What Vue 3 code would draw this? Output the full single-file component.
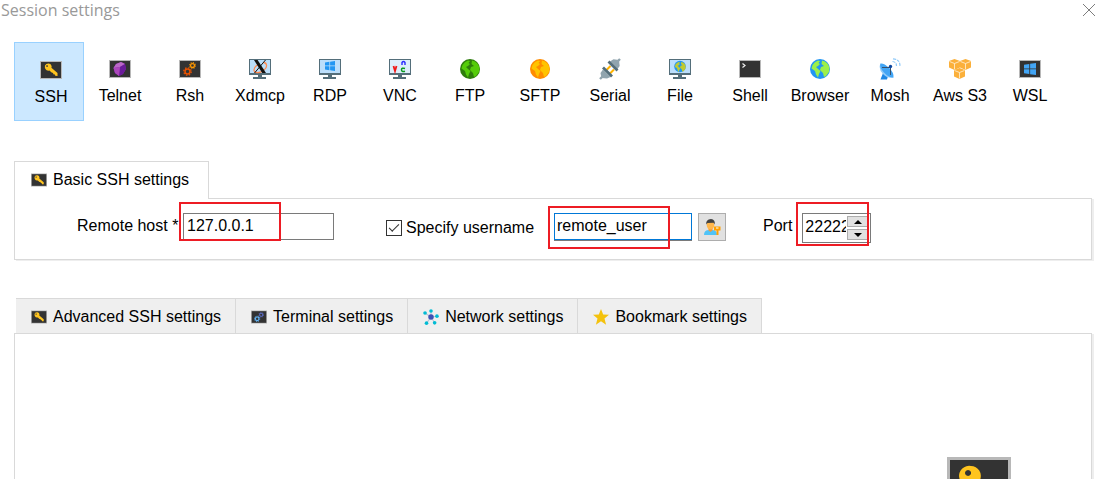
<script setup>
import { ref } from 'vue';

const sessions = ['SSH', 'Telnet', 'Rsh', 'Xdmcp', 'RDP', 'VNC', 'FTP', 'SFTP', 'Serial', 'File', 'Shell', 'Browser', 'Mosh', 'Aws S3', 'WSL'];
const activeSession = ref('SSH');

const settingTabs = [
    { label: 'Advanced SSH settings', icon: 'key' },
    { label: 'Terminal settings', icon: 'gears' },
    { label: 'Network settings', icon: 'network' },
    { label: 'Bookmark settings', icon: 'star' },
];

const host = ref('127.0.0.1');
const useName = ref(true);
const username = ref('remote_user');
const port = ref('22222');

function iconId(name){
    return '#i-' + name.toLowerCase().replace(' ', '');
}
function stepPort(n){
    port.value = String(Number(port.value) + n);
}
</script>

<template>
    <svg class="sprite" aria-hidden="true">
        <defs>
            <symbol id="i-screen" viewBox="0 0 22 22">
                <rect x="0" y="2" width="22" height="18" fill="#b8b8b8"/>
                <rect x="1" y="3" width="20" height="16" fill="#333"/>
            </symbol>
            <symbol id="i-monitor" viewBox="0 0 22 22">
                <rect x="0" y="1" width="22" height="16" fill="#546e7a"/>
                <path d="M9 17h4v2h4v2H4v-2h5z" fill="#546e7a"/>
                <rect x="1" y="2" width="20" height="13" fill="#bbdefb"/>
            </symbol>
            <symbol id="i-gear" viewBox="0 0 8 8">
                <circle cx="4" cy="4" r="2.2" fill="none" stroke="currentColor" stroke-width="1.4"/>
                <circle cx="4" cy="4" r="3.3" fill="none" stroke="currentColor" stroke-width="1.2" stroke-dasharray="1.3 1.29"/>
            </symbol>
            <symbol id="i-land" viewBox="0 0 20 20">
                <path d="M2.5 6Q4.500 2.500 8 1.500l2 .5-1.500 2L10 5 8 7 6 8l2 2 2.500 2L9 15l-1 3.500L6 15.500 5 12 1.500 9.500z"/>
                <path d="M12 1.500Q18.500 3 19.500 9L19 13l-3 4-2 1-1-4-3-3 1-3 3-1-2.500-2z"/>
            </symbol>
            <symbol id="i-win" viewBox="0 0 10 10">
                <path d="M0 1.5 4.4.8v3.8H0zM5.1.7 10 0v4.6H5.1zM0 5.3h4.4v3.9L0 8.5zM5.1 5.3H10V10l-4.9-.7z"/>
            </symbol>
            <symbol id="i-key" viewBox="0 0 22 22">
                <use href="#i-screen"/>
                <path fill="#ffc41f" fill-rule="evenodd" d="M5 6.500Q6 4.300 9 4.500q2.500.6 2.700 3l-.3 1.300 6.100 5.200v3l-2.300-.2-.3-1.400-1.600-.2-.2-1.300-1.500-.3L9.400 11.600q-2.800.5-4-1.600-.9-1.500-.4-3.500zM7 6.200a.8.800 0 1 0 .1 0z"/>
            </symbol>
            <symbol id="i-ssh" viewBox="0 0 22 22"><use href="#i-key"/></symbol>
            <symbol id="i-telnet" viewBox="0 0 22 22">
                <use href="#i-screen"/>
                <path d="M12 4 16 6l1 5-3 5-4 2-4-3-1.500-5L7 6z" fill="#8e24aa"/>
                <path d="M12 4 7 6l-2.500 4 6.500-1 5-3z" fill="#ba68c8"/>
                <path d="m11 9 5-3 1 5-3 5-4 2z" fill="#6a1b9a"/>
                <path d="M4.500 10 11 9l-1 9-4-3z" fill="#ab47bc"/>
            </symbol>
            <symbol id="i-rsh" viewBox="0 0 22 22">
                <use href="#i-screen"/>
                <use href="#i-gear" x="4" y="9" width="9" height="9" class="gear-red"/>
                <use href="#i-gear" x="10" y="4" width="7" height="7" class="gear-orange"/>
            </symbol>
            <symbol id="i-gears" viewBox="0 0 22 22">
                <use href="#i-screen"/>
                <use href="#i-gear" x="4" y="9" width="9" height="9" class="gear-sky"/>
                <use href="#i-gear" x="10" y="4" width="8" height="8" class="gear-indigo"/>
            </symbol>
            <symbol id="i-xdmcp" viewBox="0 0 22 22">
                <use href="#i-monitor"/>
                <path d="M14.5 4.5c4 .4 4 5 .5 7.500-4 3.400-9.500 3.600-10 .3C4.800 9.600 8 7.200 10.500 6.200" fill="none" stroke="#ff8a50" stroke-width="1.3"/>
                <path d="M5 2h3.600L17 15h-3.800z" fill="#111"/>
                <path d="M16.500 2 5.500 15" stroke="#111" stroke-width="1"/>
            </symbol>
            <symbol id="i-rdp" viewBox="0 0 22 22">
                <use href="#i-monitor"/>
                <use href="#i-win" x="6" y="3" width="10" height="10" fill="#2196f3"/>
            </symbol>
            <symbol id="i-vnc" viewBox="0 0 22 22">
                <use href="#i-monitor"/>
                <rect x="1" y="2" width="20" height="13" fill="#dceefb"/>
                <path d="m4.500 8 1.500 5 1.500-5" fill="none" stroke="#f01818" stroke-width="1.8"/>
                <path d="M13 7V4.500q1.500-2 3 0V7" fill="none" stroke="#2a2aff" stroke-width="1.400"/>
                <path d="M16 10.500q-3.500-1-3.500 1.200 0 2.500 3.500 1.500" fill="none" stroke="#0a9a20" stroke-width="1.500"/>
            </symbol>
            <symbol id="i-ftp" viewBox="0 0 22 22">
                <circle cx="11" cy="11" r="10" fill="#2e7d0c"/>
                <use href="#i-land" x="1" y="1" width="20" height="20" fill="#55cc0a"/>
            </symbol>
            <symbol id="i-sftp" viewBox="0 0 22 22">
                <circle cx="11" cy="11" r="10" fill="#ff8c00"/>
                <use href="#i-land" x="1" y="1" width="20" height="20" fill="#ffc400"/>
            </symbol>
            <symbol id="i-browser" viewBox="0 0 22 22">
                <circle cx="11" cy="11" r="10" fill="#2196f3"/>
                <use href="#i-land" x="1" y="1" width="20" height="20" fill="#9cf04a"/>
            </symbol>
            <symbol id="i-serial" viewBox="0 0 22 22">
                <path d="m1 21 3-3M21 1l-3 3" stroke="#90a4ae" stroke-width="2.400"/>
                <path d="M4 11.500 11.500 19 8 20.500l-5.500-.5L1.500 15z" fill="#90a4ae"/>
                <path d="m11 3.500 7.500 7.500 2.200-3-.7-6-5.500-.7z" fill="#90a4ae"/>
                <path d="m7.500 12 4-4M11 15.500l4-4" stroke="#ffb300" stroke-width="2"/>
                <path d="m4 9.500 9 9M9.500 3.500l9 9" stroke="#546e7a" stroke-width="2.800"/>
            </symbol>
            <symbol id="i-file" viewBox="0 0 22 22">
                <use href="#i-monitor"/>
                <circle cx="11" cy="8.500" r="5.800" fill="#2196f3"/>
                <use href="#i-land" x="5" y="3" width="12" height="12" fill="#c0ca33"/>
            </symbol>
            <symbol id="i-shell" viewBox="0 0 22 22">
                <use href="#i-screen"/>
                <path d="m3.500 5.500 2.500 2-2.500 2" fill="none" stroke="#eee" stroke-width="1.200"/>
            </symbol>
            <symbol id="i-mosh" viewBox="0 0 22 22">
                <path d="m4 15-2.500 6.500H8L9 18z" fill="#1e88e5"/>
                <path d="M1.500 5.500Q-1 11 4 16t10.500 3.500z" fill="#90caf9"/>
                <path d="M1.500 5.500Q5 5 10 9.800t4.500 9.700Q10 20 5 14.500T1.500 5.500z" fill="#42a5f5"/>
                <path d="M3 9.500h8.500V17" fill="none" stroke="#37506b" stroke-width="1"/>
                <circle cx="11.500" cy="8.500" r="1.700" fill="#0d47a1"/>
                <path d="M13.500 3.500q4 .5 4 4.500M14 .8q7 .4 7 7.200" fill="none" stroke="#90caf9" stroke-width="1.200" stroke-dasharray="3 1"/>
            </symbol>
            <symbol id="i-cube" viewBox="0 0 11 11">
                <path d="M5.500 0 11 2v6.500L5.500 11 0 8.500V2z" fill="#fbb03b"/>
                <path d="m.5 2.500 5 2 5-2M5.500 4.500v6" fill="none" stroke="#fff3dc" stroke-width=".8"/>
            </symbol>
            <symbol id="i-awss3" viewBox="0 0 22 22">
                <use href="#i-cube" x="0" y="1" width="11" height="11"/>
                <use href="#i-cube" x="11" y="1" width="11" height="11"/>
                <use href="#i-cube" x="5" y="10" width="11" height="11"/>
            </symbol>
            <symbol id="i-wsl" viewBox="0 0 22 22">
                <use href="#i-screen"/>
                <use href="#i-win" x="5" y="5" width="12" height="12" fill="#42a5f5"/>
            </symbol>
            <symbol id="i-network" viewBox="0 0 22 22">
                <path d="M11 11V3M11 11 2.500 5.500M11 11l8-1M11 11l5 8M11 11l-6 8.500" stroke="#b9c3d6" stroke-width="1.500"/>
                <circle cx="11" cy="11" r="3.800" fill="#3f51b5"/>
                <g fill="#00bcd4">
                    <circle cx="11" cy="2.800" r="2.500"/>
                    <circle cx="2.800" cy="5.500" r="2.500"/>
                    <circle cx="19.200" cy="9.800" r="2.500"/>
                    <circle cx="16" cy="19" r="2.500"/>
                    <circle cx="4.800" cy="19.500" r="2.500"/>
                </g>
            </symbol>
            <symbol id="i-star" viewBox="0 0 22 22">
                <path d="m11 0 3 7.700 8 .3-6.200 5.200L18 21.500l-7-4.700-7 4.700 2.200-8.300L0 8l8-.3z" fill="#f4c20d"/>
            </symbol>
            <symbol id="i-user" viewBox="0 0 18 18">
                <path d="M1 17q0-5 5-5h3q5 0 5 5z" fill="#4fc3f7"/>
                <path d="M5.500 10h4v2.500l-2 1.500-2-1.500z" fill="#ef9a3c"/>
                <ellipse cx="7.500" cy="7" rx="3.800" ry="4.600" fill="#ffb74d"/>
                <path d="M3.300 6.500Q2.500 1.500 8 1q4.500.5 3.700 5.500L10.500 4.800l-6 .2z" fill="#424242"/>
                <path d="M11 8.500h6.500v4h-2V17h-2v-4.500H11z" fill="#ffa000"/>
                <path d="M13 10h2.500" stroke="#fff" stroke-width="1"/>
            </symbol>
        </defs>
    </svg>

    <div class="dialog">
        <header class="titlebar">
            <h1 class="titlebar__text">Session settings</h1>
            <button type="button" class="titlebar__close" aria-label="Close">
                <svg viewBox="0 0 12 12" width="12" height="12"><path d="m0 0 12 12M12 0 0 12" stroke="#7d7d7d"/></svg>
            </button>
        </header>

        <nav class="sessions">
            <button
                v-for="name in sessions"
                :key="name"
                type="button"
                class="session"
                :class="{ 'session--active': name === activeSession }"
                @click="activeSession = name"
            >
                <svg class="session__icon"><use :href="iconId(name)"/></svg>
                <span>{{ name }}</span>
            </button>
        </nav>

        <section class="basic">
            <div class="tabs">
                <button type="button" class="tab tab--open">
                    <svg class="tab__icon"><use href="#i-key"/></svg>Basic SSH settings
                </button>
            </div>
            <form class="panel form" @submit.prevent>
                <div class="field field--host">
                    <label for="host">Remote host *</label>
                    <input id="host" v-model="host" type="text" class="input input--host" />
                    <span class="mark mark--host"></span>
                </div>
                <div class="field field--user">
                    <label class="check">
                        <input v-model="useName" type="checkbox" class="check__box" />Specify username
                    </label>
                    <div class="combo">
                        <input v-model="username" type="text" class="input input--user" aria-label="Username" />
                        <span class="mark mark--user"></span>
                    </div>
                    <button type="button" class="user-btn" aria-label="Manage users">
                        <svg width="18" height="18"><use href="#i-user"/></svg>
                    </button>
                </div>
                <div class="field">
                    <label for="port">Port</label>
                    <div class="spin">
                        <input id="port" v-model="port" type="text" class="spin__input" />
                        <div class="spin__buttons">
                            <button type="button" class="spin__btn" aria-label="Increase" @click="stepPort(1)">
                                <svg viewBox="0 0 8 4" width="8" height="4"><path d="M0 4 4 0l4 4z"/></svg>
                            </button>
                            <button type="button" class="spin__btn" aria-label="Decrease" @click="stepPort(-1)">
                                <svg viewBox="0 0 8 4" width="8" height="4"><path d="m0 0 4 4 4-4z"/></svg>
                            </button>
                        </div>
                        <span class="mark mark--port"></span>
                    </div>
                </div>
            </form>
        </section>

        <section class="more">
            <div class="tabs tabs--closed">
                <button v-for="tab in settingTabs" :key="tab.label" type="button" class="tab">
                    <svg class="tab__icon"><use :href="iconId(tab.icon)"/></svg>{{ tab.label }}
                </button>
            </div>
            <div class="panel more__body">
                <svg class="big-key" viewBox="0 0 64 56">
                    <rect width="64" height="56" fill="#b8b8b8"/>
                    <rect x="3" y="3" width="58" height="50" fill="#333"/>
                    <path fill="#ffc41f" fill-rule="evenodd" d="M24 9a10 10 0 0 1 9 14l18 16v7h-6l-2-4-5-1-2-4-5-1-5-8A10 10 0 1 1 24 9zM21 13a3 3 0 1 0 .1 0z"/>
                </svg>
            </div>
        </section>
    </div>
</template>

<style>
body{
    background: #fff;
}
</style>

<style scoped>
.sprite{
    position: absolute;
    width: 0;
    height: 0;
}

.gear-red{ color: #e65100; }
.gear-orange{ color: #ff9800; }
.gear-sky{ color: #64b5f6; }
.gear-indigo{ color: #5c6bc0; }

.dialog{
    display: flex;
    flex-direction: column;
    height: 100vh;
    overflow: hidden;
    font: 16px/20px "Liberation Sans", Arial, sans-serif;
    color: #000;
}

button{
    margin: 0;
    padding: 0;
    font: inherit;
    color: inherit;
}

input{
    box-sizing: border-box;
    margin: 0;
    font: inherit;
    color: inherit;
    outline: 0;
}

.titlebar{
    display: flex;
    justify-content: space-between;
    align-items: center;
    height: 20px;
    padding: 0 6px 0 1px;
}

.titlebar__text{
    margin: 0;
    font: 400 16px/20px "Open Sans", "Segoe UI", sans-serif;
    color: #999;
}

.titlebar__close{
    display: flex;
    border: 0;
    background: none;
}

.sessions{
    display: flex;
    flex: none;
    padding: 22px 14px 0;
}

.session{
    display: flex;
    flex-direction: column;
    align-items: center;
    box-sizing: border-box;
    width: 70px;
    height: 79px;
    padding: 15px 0 0 2px;
    border: 1px solid transparent;
    background: none;
    white-space: nowrap;
}

.session--active{
    padding: 16px 0 0 4px;
    border-color: #99d1ff;
    background: #cce8ff;
}

.session__icon{
    width: 22px;
    height: 22px;
    margin-bottom: 6px;
}

.basic,
.more{
    padding: 0 7px 0 14px;
}

.basic{
    flex: none;
    padding-top: 40px;
}

.more{
    display: flex;
    flex: 1;
    flex-direction: column;
    padding-top: 38px;
}

.tabs{
    display: flex;
}

.tabs--closed{
    padding-left: 2px;
}

.tab{
    display: flex;
    align-items: center;
    gap: 6px;
    box-sizing: border-box;
    height: 35px;
    padding: 1px 14px 0 15px;
    border: 1px solid #d9d9d9;
    border-width: 1px 1px 0 0;
    background: #efefef;
    white-space: nowrap;
}

.tab--open{
    height: 38px;
    margin-bottom: -1px;
    padding: 0 19px 2px 16px;
    border-left-width: 1px;
    background: #fff;
    z-index: 1;
}

.tab__icon{
    width: 16px;
    height: 16px;
}

.panel{
    margin-right: 2px;
    border: 1px solid #d9d9d9;
    box-shadow: 2px 1px 0 #eee;
}

.form{
    display: flex;
    align-items: flex-start;
    height: 46px;
    padding: 14px 0 0 62px;
}

.field{
    display: flex;
    position: relative;
    line-height: 25px;
    white-space: nowrap;
}

.field--host{
    gap: 4px;
    width: 309px;
}

.field--host label{
    width: 102px;
}

.field--user{
    width: 377px;
}

.input{
    height: 27px;
    padding: 0 3px 2px;
    border: 1px solid #7a7a7a;
    background: #fff;
}

.input--host{
    width: 151px;
}

.check{
    display: flex;
    align-items: center;
    gap: 4px;
    width: 168px;
    height: 29px;
}

.check__box{
    display: grid;
    place-items: center;
    width: 16px;
    height: 16px;
    border: 1px solid #333;
    background: #fff;
    appearance: none;
}

.check__box:checked::before{
    content: "";
    width: 9px;
    height: 4px;
    margin-bottom: 3px;
    border: solid #333;
    border-width: 0 0 1px 1px;
    transform: rotate(-45deg);
}

.combo{
    position: relative;
    height: 27px;
    border-bottom: 1px solid #7a7a7a;
}

.input--user{
    display: block;
    width: 138px;
    padding: 0 3px 2px 2px;
    border-color: #0078d7;
}

.user-btn{
    display: flex;
    align-items: center;
    justify-content: center;
    box-sizing: border-box;
    width: 28px;
    height: 28px;
    margin-left: 6px;
    border: 1px solid #adadad;
    background: #e1e1e1;
}

.spin{
    display: flex;
    position: relative;
    box-sizing: border-box;
    width: 69px;
    height: 30px;
    margin-left: 10px;
    border: 1px solid #7a7a7a;
}

.spin__input{
    width: 43px;
    height: 24px;
    padding: 0 0 0 2px;
    border: 0;
    background: none;
}

.spin__buttons{
    display: flex;
    flex-direction: column;
    gap: 2px;
    padding: 2px 0 0 1px;
}

.spin__btn{
    display: flex;
    align-items: center;
    justify-content: center;
    box-sizing: border-box;
    width: 21px;
    height: 11px;
    border: 1px solid #adadad;
    background: #e1e1e1;
}

/* red callouts round the values to fill in */
.mark{
    position: absolute;
    box-sizing: border-box;
    border: 2px solid #ed1c24;
    pointer-events: none;
}

.mark--host{
    left: 102px;
    top: -11px;
    width: 102px;
    height: 39px;
}

.mark--user{
    left: -6px;
    top: -7px;
    width: 122px;
    height: 43px;
}

.mark--port{
    left: -7px;
    top: -12px;
    width: 73px;
    height: 44px;
}

.more__body{
    display: flex;
    flex: 1 0 auto;
    justify-content: flex-end;
    align-items: flex-start;
    padding: 123px 80px 0 0;
}

.big-key{
    width: 64px;
    height: 56px;
}
</style>
